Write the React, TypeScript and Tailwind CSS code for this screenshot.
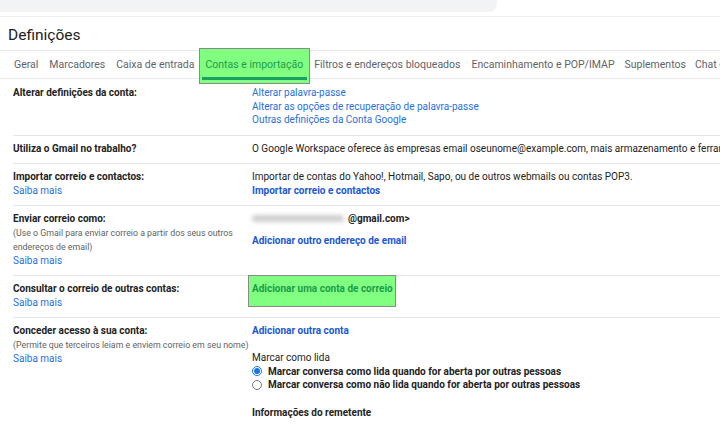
import React from "react";

const F = { fontFamily: "Roboto, Arial, sans-serif" };

function Link({ children, bold = false }: { children: React.ReactNode; bold?: boolean }) {
  return (
    <div className={bold ? "text-[#1a56d6] font-bold" : "text-[#2a6fdb]"}>{children}</div>
  );
}

function Row({
  label,
  sub,
  saiba,
  children,
  cls = "",
}: {
  label: string;
  sub?: string[];
  saiba?: boolean;
  children?: React.ReactNode;
  cls?: string;
}) {
  return (
    <div className={"flex border-b border-[#e6e6e6] pt-[6px] pb-[8px] " + cls}>
      <div className="w-[239px] shrink-0">
        <div className="font-bold text-[#222]">{label}</div>
        {sub && (
          <div className="text-[8.8px] leading-[14px] text-[#5f5f5f]">
            {sub.map((s, i) => (
              <div key={i} className="whitespace-nowrap">{s}</div>
            ))}
          </div>
        )}
        {saiba && <Link>Saiba mais</Link>}
      </div>
      <div className="flex-1 whitespace-nowrap text-[#222]">{children}</div>
    </div>
  );
}

export default function App() {
  const tabs = [
    "Geral",
    "Marcadores",
    "Caixa de entrada",
    "Contas e importação",
    "Filtros e endereços bloqueados",
    "Encaminhamento e POP/IMAP",
    "Suplementos",
    "Chat e videoconferência",
  ];
  return (
    <div className="w-[720px] h-[424px] overflow-hidden bg-white" style={F}>
      <div className="h-[17px] border-b border-[#ededed]">
        <div className="w-[497px] h-[12px] bg-[#f1f3f4] rounded-br-[8px]" />
      </div>
      <div className="pl-[8px] pt-[8px] h-[33px] text-[15.5px] leading-[20px] text-[#202124]">Definições</div>
      <div className="flex h-[29px] border-t border-b border-[#e8e8e8] pl-[8.5px] whitespace-nowrap text-[10.5px] text-[#5f6368]">
        {tabs.map((t) =>
          t === "Contas e importação" ? (
            <div key={t} className="relative px-[5.5px] flex items-center">
              <div className="absolute left-[-1px] right-[-1px] top-[-3px] bottom-[-6px] bg-[#80ff80] border border-[#8a8a8a]" />
              <div className="absolute left-[2px] right-[2px] bottom-[-2px] h-[3px] bg-[#1aa260]" />
              <span className="relative text-[#1b9b4b]">{t}</span>
            </div>
          ) : (
            <div key={t} className={"flex items-center " + (t === "Suplementos" || t === "Chat e videoconferência" ? "px-[4.5px]" : "px-[5.5px]")}>
              {t}
            </div>
          )
        )}
      </div>
      <div className="ml-[13px] text-[10px] leading-[13.5px]">
        <Row label="Alterar definições da conta:" cls="pt-[7px]">
          <Link>Alterar palavra-passe</Link>
          <Link>Alterar as opções de recuperação de palavra-passe</Link>
          <Link>Outras definições da Conta Google</Link>
        </Row>
        <Row label="Utiliza o Gmail no trabalho?">
          <div>
            O Google Workspace oferece às empresas email oseunome@example.com, mais armazenamento e ferramentas de administração.
          </div>
        </Row>
        <Row label="Importar correio e contactos:" saiba>
          <div>Importar de contas do Yahoo!, Hotmail, Sapo, ou de outros webmails ou contas POP3.</div>
          <Link bold>Importar correio e contactos</Link>
        </Row>
        <Row
          label="Enviar correio como:"
          sub={["(Use o Gmail para enviar correio a partir dos seus outros", "endereços de email)"]}
          saiba
        >
          <div className="flex items-center font-bold">
            <span className="inline-block w-[92px] h-[7px] rounded-full bg-[#cfcfcf] blur-[2px] mr-[4px]" />
            @gmail.com&gt;
          </div>
          <div className="mt-[8px]">
            <Link bold>Adicionar outro endereço de email</Link>
          </div>
        </Row>
        <Row label="Consultar o correio de outras contas:" saiba>
          <div className="relative">
            <div className="absolute left-[-4px] top-[-7px] w-[148px] h-[32px] bg-[#80ff80] border border-[#8a8a8a]" />
            <div className="relative text-[#1b9b4b] font-bold">Adicionar uma conta de correio</div>
          </div>
        </Row>
        <Row
          label="Conceder acesso à sua conta:"
          sub={["(Permite que terceiros leiam e enviem correio em seu nome)"]}
          saiba
          cls="border-b-0"
        >
          <Link bold>Adicionar outra conta</Link>
          <div className="mt-[13.5px] text-[#222]">Marcar como lida</div>
          <div className="flex items-center gap-[6px] font-bold text-[#222]">
            <span className="w-[10px] h-[10px] rounded-full border border-[#1a73e8] flex items-center justify-center">
              <span className="w-[6px] h-[6px] rounded-full bg-[#1a73e8]" />
            </span>
            Marcar conversa como lida quando for aberta por outras pessoas
          </div>
          <div className="flex items-center gap-[6px] font-bold text-[#222]">
            <span className="w-[10px] h-[10px] rounded-full border border-[#777]" />
            Marcar conversa como não lida quando for aberta por outras pessoas
          </div>
          <div className="mt-[14px] font-bold text-[#222]">Informações do remetente</div>
        </Row>
      </div>
    </div>
  );
}
